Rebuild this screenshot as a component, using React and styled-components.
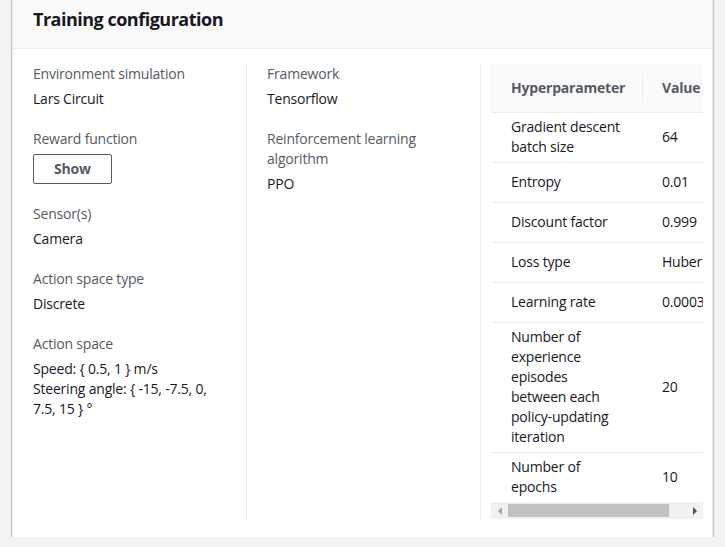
import React from "react";
import styled, { createGlobalStyle } from "styled-components";

const Global = createGlobalStyle`
  html, body { margin: 0; padding: 0; background: #f2f3f3; }
  body {
    font-family: "Open Sans", "Noto Sans", Arial, sans-serif;
    font-size: 14px;
    line-height: 20px;
    letter-spacing: -0.2px;
    color: #16191f;
    overflow: hidden;
  }
  * { box-sizing: border-box; }
`;

const Page = styled.div`
  width: 725px;
  height: 547px;
  background: #f2f3f3;
  padding: 0 12px;
`;

const Card = styled.section`
  margin-top: -10px;
  width: 701px;
  background: #fff;
  border: 1px solid #eaeded;
  border-top: none;
  box-shadow: 0 1px 1px 0 rgba(0, 28, 36, 0.3), 1px 1px 1px 0 rgba(0, 28, 36, 0.15),
    -1px 1px 1px 0 rgba(0, 28, 36, 0.15);
`;

const Header = styled.header`
  background: #fafafa;
  border-bottom: 1px solid #eaeded;
  padding: 17px 20px 17px;
`;

const Title = styled.h2`
  margin: 0;
  font-size: 18px;
  line-height: 24px;
  font-weight: 700;
  letter-spacing: -0.5px;
  color: #16191f;
`;

const Body = styled.div`
  padding: 15px 0 21px;
  display: grid;
  grid-template-columns: 233px 234px 232px;
`;

const Column = styled.div`
  padding: ${(p) => (p.$table ? "0 10px" : "0 20px")};
  border-left: ${(p) => (p.$first ? "none" : "1px solid #eaeded")};
  display: flex;
  flex-direction: column;
  gap: 20px;
  min-width: 0;
`;

const Field = styled.div`
  display: flex;
  flex-direction: column;
  gap: 5px;
  align-items: flex-start;
`;

const Label = styled.div`
  color: #545b64;
`;

const Value = styled.div`
  color: #16191f;
`;

const Button = styled.button`
  font-family: inherit;
  font-size: 14px;
  line-height: 20px;
  letter-spacing: -0.2px;
  font-weight: 700;
  color: #545b64;
  background: #fff;
  border: 1px solid #545b64;
  border-radius: 2px;
  width: 79px;
  height: 30px;
  padding: 0;
  cursor: pointer;
`;

const TableWrap = styled.div`
  width: 212px;
  overflow: hidden;
`;

const Table = styled.table`
  border-collapse: collapse;
  table-layout: fixed;
  width: 234px;
  tbody tr + tr td {
    border-top: 1px solid #eaeded;
  }
`;

const Th = styled.th`
  height: 48px;
  background: #fafafa;
  border-bottom: 1px solid #eaeded;
  text-align: left;
  font-weight: 700;
  color: #545b64;
  padding: 0 20px;
  position: relative;
  white-space: nowrap;
  &:not(:first-child)::before {
    content: "";
    position: absolute;
    left: 0;
    top: 12px;
    bottom: 12px;
    border-left: 1px solid #eaeded;
  }
`;

const Tr = styled.tr`
  height: ${(p) => p.$h}px;
`;

const Td = styled.td`
  padding: ${(p) => (p.$nowrap ? "4px 20px" : "4px 17px 4px 20px")};
  vertical-align: middle;
  color: #16191f;
  white-space: ${(p) => (p.$nowrap ? "nowrap" : "normal")};
  overflow: hidden;
`;

const Scrollbar = styled.div`
  height: 17px;
  background: #f1f1f1;
  display: flex;
  align-items: center;
`;

const Arrow = styled.div`
  width: 17px;
  height: 17px;
  display: flex;
  align-items: center;
  justify-content: center;
  &::after {
    content: "";
    width: 0;
    height: 0;
    border-top: 4px solid transparent;
    border-bottom: 4px solid transparent;
    ${(p) =>
      p.$dir === "left"
        ? "border-right: 4px solid #a3a3a3;"
        : "border-left: 4px solid #505050;"}
  }
`;

const Track = styled.div`
  flex: 1;
  height: 17px;
  padding: 2px 0;
`;

const Thumb = styled.div`
  height: 13px;
  background: #c1c1c1;
`;

const rows = [
  ["Gradient descent batch size", "64", 50],
  ["Entropy", "0.01", 40],
  ["Discount factor", "0.999", 40],
  ["Loss type", "Huber", 40],
  ["Learning rate", "0.0003", 40],
  ["Number of experience episodes between each policy-updating iteration", "20", 130],
  ["Number of epochs", "10", 50],
];

export default function App() {
  return (
    <>
      <Global />
      <Page>
        <Card>
          <Header>
            <Title>Training configuration</Title>
          </Header>
          <Body>
            <Column $first>
              <Field>
                <Label>Environment simulation</Label>
                <Value>Lars Circuit</Value>
              </Field>
              <Field>
                <Label>Reward function</Label>
                <Button>Show</Button>
              </Field>
              <Field>
                <Label>Sensor(s)</Label>
                <Value>Camera</Value>
              </Field>
              <Field>
                <Label>Action space type</Label>
                <Value>Discrete</Value>
              </Field>
              <Field>
                <Label>Action space</Label>
                <Value>
                  Speed: {"{ 0.5, 1 }"} m/s
                  <br />
                  Steering angle: {"{ -15, -7.5, 0, 7.5, 15 }"} °
                </Value>
              </Field>
            </Column>
            <Column>
              <Field>
                <Label>Framework</Label>
                <Value>Tensorflow</Value>
              </Field>
              <Field>
                <Label>Reinforcement learning algorithm</Label>
                <Value>PPO</Value>
              </Field>
            </Column>
            <Column $table>
              <TableWrap>
                <Table>
                  <colgroup>
                    <col style={{ width: 151 }} />
                    <col style={{ width: 83 }} />
                  </colgroup>
                  <thead>
                    <tr>
                      <Th>Hyperparameter</Th>
                      <Th>Value</Th>
                    </tr>
                  </thead>
                  <tbody>
                    {rows.map(([k, v, h]) => (
                      <Tr key={k} $h={h}>
                        <Td>{k}</Td>
                        <Td $nowrap>{v}</Td>
                      </Tr>
                    ))}
                  </tbody>
                </Table>
                <Scrollbar>
                  <Arrow $dir="left" />
                  <Track>
                    <Thumb style={{ width: "90.5%" }} />
                  </Track>
                  <Arrow $dir="right" />
                </Scrollbar>
              </TableWrap>
            </Column>
          </Body>
        </Card>
      </Page>
    </>
  );
}
